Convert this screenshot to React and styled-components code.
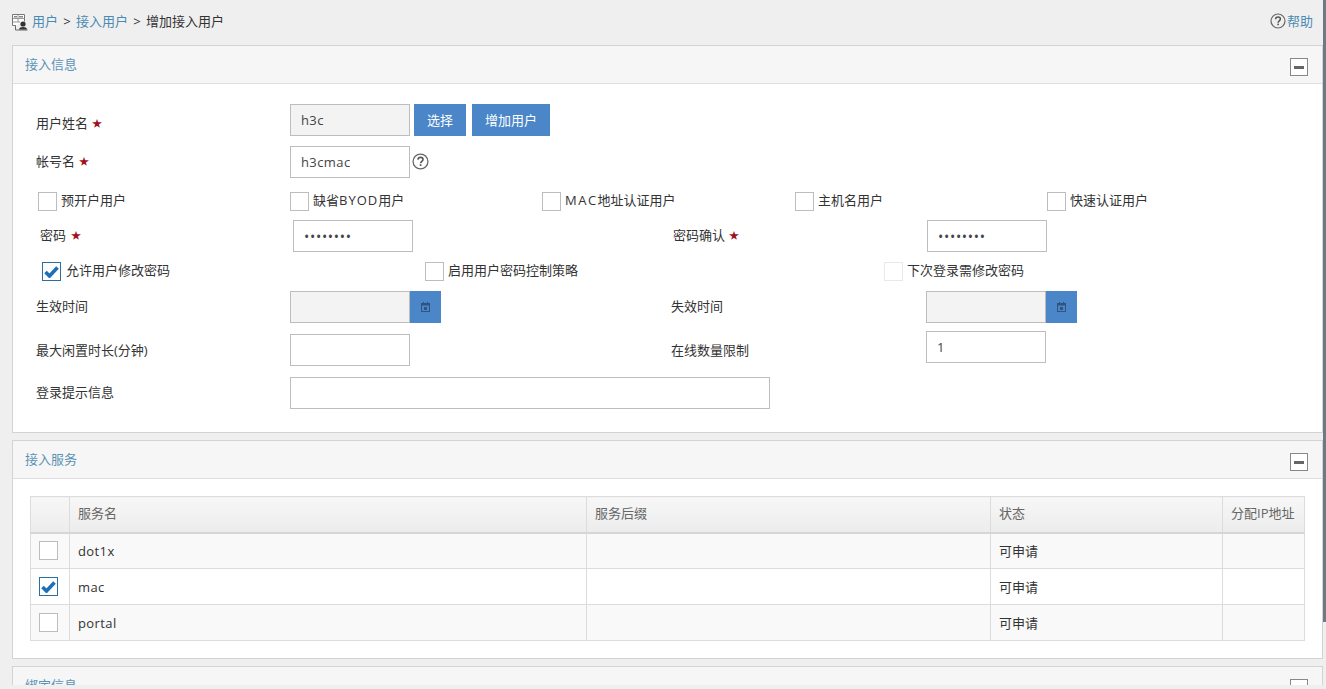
import React from "react";
import styled, { createGlobalStyle } from "styled-components";

const Global = createGlobalStyle`
  html, body { margin: 0; padding: 0; height: 689px; overflow: hidden; background: #efefef; }
  body { font-family: "Open Sans", "Noto Sans CJK SC", sans-serif; font-size: 13px; color: #333; }
`;

const Page = styled.div`
  position: relative;
  width: 1326px;
  height: 689px;
  overflow: hidden;
  background: #efefef;
`;
const Clip = styled.div`
  height: 685px;
  overflow: hidden;
`;
const Scrollbar = styled.div`
  position: absolute;
  top: 0;
  right: 0;
  width: 3px;
  height: 622px;
  background: #6d7985;
`;
const TopBar = styled.div`
  height: 45px;
  display: flex;
  align-items: center;
  justify-content: space-between;
  padding: 0 13px 4px 12px;
  box-sizing: border-box;
`;
const Crumbs = styled.div`
  display: flex;
  align-items: center;
  gap: 5.25px;
  color: #333;
`;
const CrumbIconWrap = styled.span`
  display: flex;
  margin: 3px -2.25px 0 0;
`;
const Link = styled.span`
  color: #4a8bb2;
`;
const Help = styled.div`
  display: flex;
  align-items: center;
  gap: 1px;
  color: #4a8bb2;
`;
const Panel = styled.section`
  margin: 0 3px 7px 12px;
  border: 1px solid #d3d3d3;
  background: #fff;
`;
const PanelHead = styled.div`
  height: 35px;
  display: flex;
  align-items: center;
  justify-content: space-between;
  padding: 0 14px 2px 12px;
  background: #f6f6f6;
  border-bottom: 1px solid #dedede;
  color: #5b93b5;
`;
const Collapse = styled.div`
  width: 18px;
  height: 18px;
  box-sizing: border-box;
  margin-top: 7px;
  border: 1px solid #888;
  background: #fff;
  display: flex;
  align-items: center;
  justify-content: center;
  &::after {
    content: "";
    width: 10px;
    height: 3px;
    background: #666;
  }
`;
const FormBody = styled.div`
  padding: 20px 0 23px;
  display: flex;
  flex-direction: column;
`;
const Row = styled.div`
  display: flex;
  align-items: flex-start;
  margin-top: ${(p) => p.$top || 0}px;
  padding-left: ${(p) => p.$left}px;
`;
const Label = styled.label`
  box-sizing: border-box;
  flex: none;
  width: ${(p) => p.$w}px;
  margin-left: ${(p) => p.$ml || 0}px;
  height: 32px;
  line-height: 30px;
  padding-top: ${(p) => p.$pt || 0}px;
  color: #333;
  white-space: nowrap;
`;
const Star = styled.span`
  color: #a01020;
  margin-left: ${(p) => p.$ml || 4}px;
  font-size: 10px;
  vertical-align: 1px;
`;
const Input = styled.input`
  box-sizing: border-box;
  flex: none;
  width: ${(p) => p.$w || 120}px;
  height: 32px;
  padding: 0 10px;
  margin: 0;
  margin-top: ${(p) => p.$mt || 0}px;
  border: 1px solid #bdbdbd;
  border-radius: 0;
  outline: none;
  font: inherit;
  font-size: ${(p) => (p.type === "password" ? 14 : 13)}px;
  letter-spacing: ${(p) => (p.type === "password" ? 0.7 : 0.4)}px;
  color: #444;
  background: ${(p) => (p.$off ? "#f3f3f3" : "#fff")};
`;
const Button = styled.button`
  box-sizing: border-box;
  height: 32px;
  width: ${(p) => p.$w}px;
  margin-left: ${(p) => p.$ml}px;
  padding: 0 0 2px;
  border: none;
  background: #4a86c8;
  color: #fff;
  font: inherit;
`;
const DateButton = styled.div`
  flex: none;
  width: 31px;
  height: 32px;
  background: #4a86c8;
  display: flex;
  align-items: center;
  justify-content: center;
`;
const HintIcon = styled.div`
  display: flex;
  margin: 7px 0 0 2px;
`;
const CheckItem = styled.div`
  flex: none;
  width: ${(p) => p.$w}px;
  display: flex;
  align-items: flex-start;
  gap: ${(p) => p.$gap || 4}px;
  line-height: 17px;
  white-space: nowrap;
  color: #333;
`;
const Box = styled.span`
  box-sizing: border-box;
  display: flex;
  align-items: center;
  justify-content: center;
  flex: none;
  width: 19px;
  height: 19px;
  background: #fff;
  border: 1px solid ${(p) => (p.$on ? "#2a6ea3" : p.$faint ? "#e9e9e9" : "#bdbdbd")};
`;
const ServiceBody = styled.div`
  padding: 17px;
`;
const Table = styled.table`
  width: 1274px;
  border-collapse: collapse;
  table-layout: fixed;
  color: #333;
`;
const Th = styled.th`
  width: ${(p) => p.$w}px;
  height: 36px;
  padding: 0 8px 3px;
  box-sizing: border-box;
  text-align: left;
  font-weight: 400;
  color: #666;
  background: linear-gradient(#f7f7f7, #ececec);
  border: 1px solid #dcdcdc;
  border-bottom: 2px solid #d6d6d6;
  white-space: nowrap;
  overflow: hidden;
`;
const Td = styled.td`
  height: 36px;
  padding: 0 8px;
  box-sizing: border-box;
  border: 1px solid #dcdcdc;
  background: ${(p) => (p.$odd ? "#f9f9f9" : "#fff")};
`;
const TdCheck = styled(Td)`
  padding: 0 0 0 8px;
`;
const Latin = styled.span`
  letter-spacing: ${(p) => p.$ls || 0.4}px;
`;

const Check = () => (
  <svg width="15" height="12" viewBox="0 0 15 12">
    <path d="M1.5 6 5.5 10 13.5 1.5" fill="none" stroke="#1e6fb8" strokeWidth="3.6" />
  </svg>
);
const Calendar = () => (
  <svg width="9" height="10" viewBox="0 0 9 10">
    <rect x="0.5" y="1.5" width="8" height="8" fill="none" stroke="#2f5580" />
    <rect x="0.5" y="1.5" width="8" height="2" fill="#2f5580" />
    <path d="M2.5 0v2M6.5 0v2" stroke="#2f5580" />
    <rect x="3" y="5" width="3" height="3" fill="#2f5580" />
  </svg>
);
const Question = ({ size = 16 }) => (
  <svg width={size} height={size} viewBox="0 0 16 16">
    <circle cx="8" cy="8" r="7" fill="none" stroke="#666" strokeWidth="1.2" />
    <path d="M5.6 6.2C5.7 4.8 6.7 4.1 8 4.1s2.4.8 2.4 2c0 1.8-2.3 1.8-2.3 3.6" fill="none" stroke="#555" strokeWidth="1.5" />
    <rect x="7.3" y="10.6" width="1.6" height="1.6" fill="#555" />
  </svg>
);
const CrumbIcon = () => (
  <svg width="17" height="17" viewBox="0 0 17 17">
    <path d="M3.5 11.5H.5V.5h12v7" fill="#fff" stroke="#777" />
    <path d="M1 4.5h11M1 8h7M6 1v7" stroke="#999" />
    <rect x="2" y="2" width="3" height="1.5" fill="#888" />
    <rect x="7" y="2" width="4" height="1.5" fill="#888" />
    <path d="M3.5 11.5v4.5h12" fill="none" stroke="#666" />
    <circle cx="11" cy="10" r="2.6" fill="#333" />
    <path d="M7 15.5c.3-2 1.8-2.6 4-2.6s3.7.6 4 2.6z" fill="#333" />
  </svg>
);

const services = [
  { name: "dot1x", on: false },
  { name: "mac", on: true },
  { name: "portal", on: false },
];

export default function App() {
  return (
    <Page>
      <Global />
      <Clip>
        <TopBar>
          <Crumbs>
            <CrumbIconWrap>
              <CrumbIcon />
            </CrumbIconWrap>
            <Link>用户</Link>
            <span>&gt;</span>
            <Link>接入用户</Link>
            <span>&gt;</span>
            <span>增加接入用户</span>
          </Crumbs>
          <Help>
            <Question />
            帮助
          </Help>
        </TopBar>

        <Panel>
          <PanelHead>
            接入信息
            <Collapse />
          </PanelHead>
          <FormBody>
            <Row $left={23}>
              <Label $w={254} $pt={4}>
                用户姓名<Star>★</Star>
              </Label>
              <Input $off readOnly value="h3c" />
              <Button $w={52} $ml={4}>选择</Button>
              <Button $w={78} $ml={6}>增加用户</Button>
            </Row>
            <Row $left={23} $top={10}>
              <Label $w={254}>
                帐号名<Star>★</Star>
              </Label>
              <Input readOnly value="h3cmac" />
              <HintIcon>
                <Question size={17} />
              </HintIcon>
            </Row>
            <Row $left={25} $top={14}>
              <CheckItem $w={252}><Box />预开户用户</CheckItem>
              <CheckItem $w={252}><Box /><span>缺省<Latin $ls={1}>BYOD</Latin>用户</span></CheckItem>
              <CheckItem $w={253}><Box /><span><Latin $ls={1.5}>MAC</Latin>地址认证用户</span></CheckItem>
              <CheckItem $w={252}><Box />主机名用户</CheckItem>
              <CheckItem $w={120}><Box />快速认证用户</CheckItem>
            </Row>
            <Row $left={27} $top={9}>
              <Label $w={253}>
                密码<Star $ml={5}>★</Star>
              </Label>
              <Input type="password" readOnly value="12345678" />
              <Label $w={254} $ml={260}>
                密码确认<Star>★</Star>
              </Label>
              <Input type="password" readOnly value="12345678" />
            </Row>
            <Row $left={29} $top={10}>
              <CheckItem $w={383} $gap={5}><Box $on><Check /></Box>允许用户修改密码</CheckItem>
              <CheckItem $w={459}><Box />启用用户密码控制策略</CheckItem>
              <CheckItem $w={160}><Box $faint />下次登录需修改密码</CheckItem>
            </Row>
            <Row $left={23} $top={10}>
              <Label $w={254}>生效时间</Label>
              <Input $off readOnly />
              <DateButton><Calendar /></DateButton>
              <Label $w={255} $ml={230}>失效时间</Label>
              <Input $off readOnly />
              <DateButton><Calendar /></DateButton>
            </Row>
            <Row $left={23} $top={8}>
              <Label $w={254} $pt={4}>最大闲置时长(分钟)</Label>
              <Input $mt={3} readOnly />
              <Label $w={255} $ml={261} $pt={4}>在线数量限制</Label>
              <Input readOnly value="1" />
            </Row>
            <Row $left={23} $top={11}>
              <Label $w={254}>登录提示信息</Label>
              <Input $w={480} readOnly />
            </Row>
          </FormBody>
        </Panel>

        <Panel>
          <PanelHead>
            接入服务
            <Collapse />
          </PanelHead>
          <ServiceBody>
            <Table>
              <thead>
                <tr>
                  <Th $w={39} />
                  <Th $w={517}>服务名</Th>
                  <Th $w={404}>服务后缀</Th>
                  <Th $w={232}>状态</Th>
                  <Th $w={82}>分配IP地址</Th>
                </tr>
              </thead>
              <tbody>
                {services.map((s, i) => (
                  <tr key={s.name}>
                    <TdCheck $odd={i % 2 === 0}>
                      <Box $on={s.on}>{s.on && <Check />}</Box>
                    </TdCheck>
                    <Td $odd={i % 2 === 0}><Latin>{s.name}</Latin></Td>
                    <Td $odd={i % 2 === 0} />
                    <Td $odd={i % 2 === 0}>可申请</Td>
                    <Td $odd={i % 2 === 0} />
                  </tr>
                ))}
              </tbody>
            </Table>
          </ServiceBody>
        </Panel>

        <Panel>
          <PanelHead>
            绑定信息
            <Collapse />
          </PanelHead>
        </Panel>
      </Clip>
      <Scrollbar />
    </Page>
  );
}
